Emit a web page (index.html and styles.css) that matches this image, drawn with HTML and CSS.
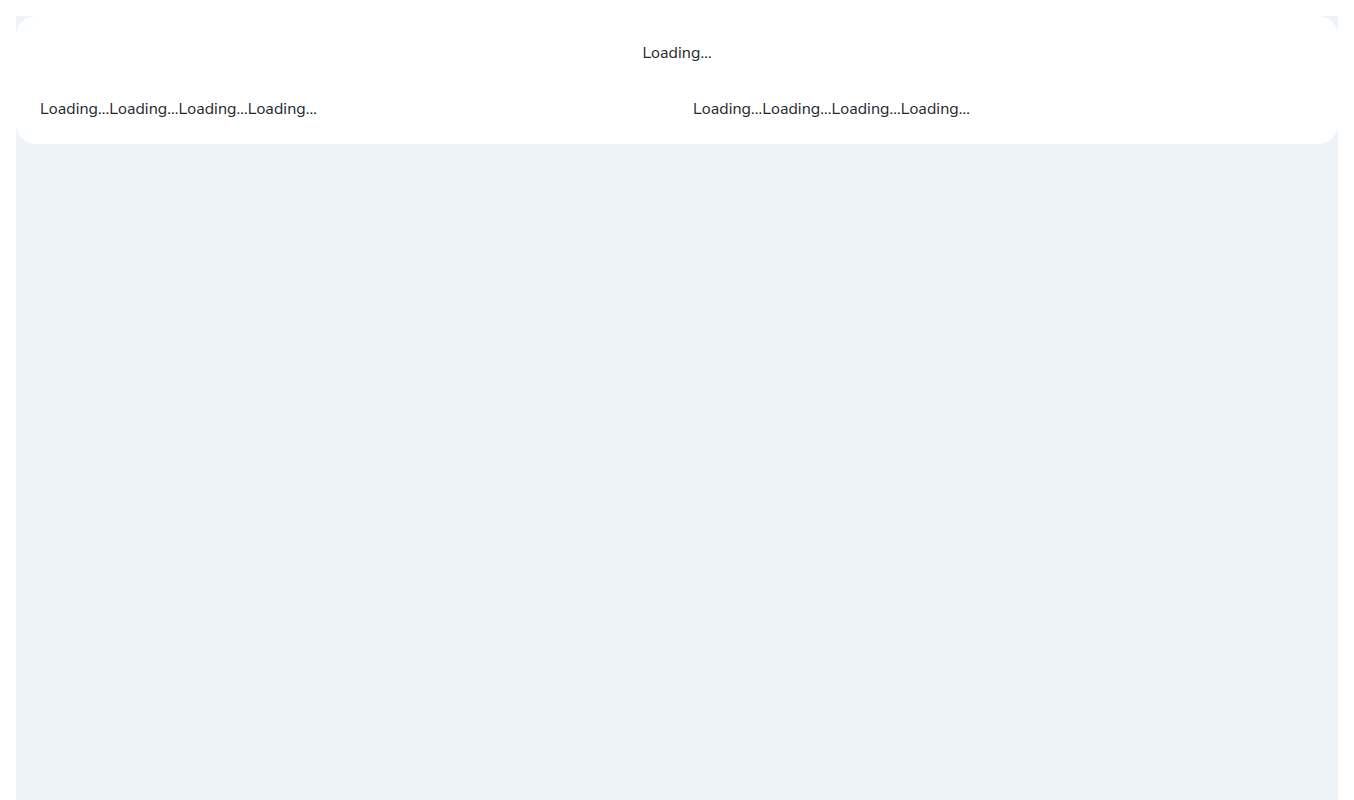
FILE: index.html
```html
<!DOCTYPE html>
<html lang="en">
<head>
<meta charset="utf-8">
<title>Loading</title>
<link rel="stylesheet" href="styles.css">
</head>
<body>
<div class="page">
  <section class="card">
    <div class="title">Loading...</div>
    <div class="cols">
      <div class="col"><span>Loading...</span><span>Loading...</span><span>Loading...</span><span>Loading...</span></div>
      <div class="col"><span>Loading...</span><span>Loading...</span><span>Loading...</span><span>Loading...</span></div>
    </div>
  </section>
</div>
</body>
</html>
```
FILE: styles.css
```css
html, body {
  margin: 0;
  padding: 0;
  background: #ffffff;
}
body {
  padding: 16px 16px 0 16px;
  font-family: "Nunito Sans", Lato, "Open Sans", sans-serif;
  font-size: 16px;
  line-height: 24px;
  letter-spacing: 0.08px;
  color: #24282c;
}
.page {
  background: #edf3f6;
  min-height: calc(100vh - 16px);
}
.card {
  background: #ffffff;
  border-radius: 20px;
  padding: 25px 24px 23px;
  display: flex;
  flex-direction: column;
  gap: 32px;
}
.title {
  text-align: center;
}
.cols {
  display: grid;
  grid-template-columns: 1fr 1fr;
  gap: 32px;
}
.col {
  display: flex;
}
```
